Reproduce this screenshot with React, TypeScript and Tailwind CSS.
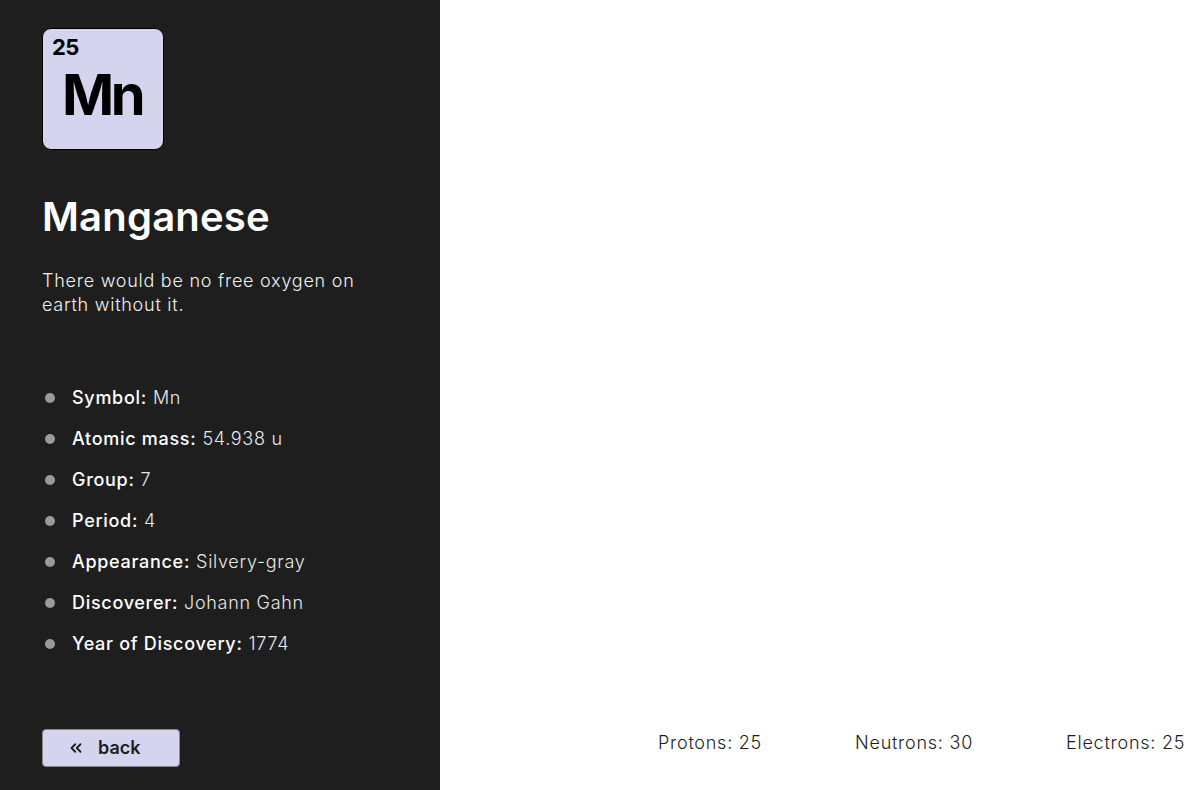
import React from 'react';

const facts: [string, string][] = [
  ['Symbol', 'Mn'],
  ['Atomic mass', '54.938 u'],
  ['Group', '7'],
  ['Period', '4'],
  ['Appearance', 'Silvery-gray'],
  ['Discoverer', 'Johann Gahn'],
  ['Year of Discovery', '1774'],
];

const App: React.FC = () => {
  return (
    <div className="flex w-[1186px] h-[790px] overflow-hidden bg-white font-['Inter',sans-serif]">
      {/* Sidebar */}
      <aside className="w-[440px] shrink-0 bg-[#1e1e1e] flex flex-col px-[42px] pt-[28px] pb-[23px]">
        <div className="w-[122px] h-[122px] rounded-[9px] border border-black bg-[#d4d4ee] text-black flex flex-col px-[9px] pt-[7px]">
          <span className="text-[22px] font-bold leading-[22px] tracking-[-0.5px]">25</span>
          <span className="mt-[9px] text-[56px] font-bold leading-[56px] pl-[10px] tracking-[-3.3px]">Mn</span>
        </div>

        <h1 className="mt-[44px] text-[40px] font-semibold leading-[46px] text-white tracking-[0.2px]">Manganese</h1>

        <p className="mt-[29px] w-[340px] text-[18px] font-light leading-[24px] tracking-[0.75px] text-[#f0f0f0]">
          There would be no free oxygen on earth without it.
        </p>

        <ul className="mt-[69px] flex flex-col gap-[17px]">
          {facts.map(([label, value]) => (
            <li key={label} className="flex items-center h-[24px] text-[18px] leading-[24px] tracking-[0.7px] text-white">
              <span className="w-[10px] h-[10px] rounded-full bg-[#9a9a9a] ml-[3px] mr-[17px] shrink-0" />
              <span className="font-medium">{label}:</span>
              <span className="font-light text-[#e8e8e8] ml-[6px]">{value}</span>
            </li>
          ))}
        </ul>

        <div className="flex-1" />

        <button className="w-[138px] h-[38px] rounded-[4px] border border-[#8a8a8a] bg-[#d4d4ee] text-[#1e1e1e] flex items-center pl-[24px]">
          <svg width="18" height="18" viewBox="0 0 24 24" fill="none" stroke="currentColor" strokeWidth="2.4" strokeLinecap="round" strokeLinejoin="round">
            <path d="M11 17l-5-5 5-5" />
            <path d="M18 17l-5-5 5-5" />
          </svg>
          <span className="ml-[13px] text-[18px] font-semibold leading-none">back</span>
        </button>
      </aside>

      {/* Main area */}
      <main className="flex-1 flex flex-col">
        <div className="flex-1" />
        <div className="flex items-center gap-[93px] pl-[218px] pb-[35px] text-[18px] font-light leading-[24px] tracking-[0.75px] text-[#1e1e1e] whitespace-nowrap">
          <span>Protons: 25</span>
          <span>Neutrons: 30</span>
          <span>Electrons: 25</span>
        </div>
      </main>
    </div>
  );
};

export default App;
